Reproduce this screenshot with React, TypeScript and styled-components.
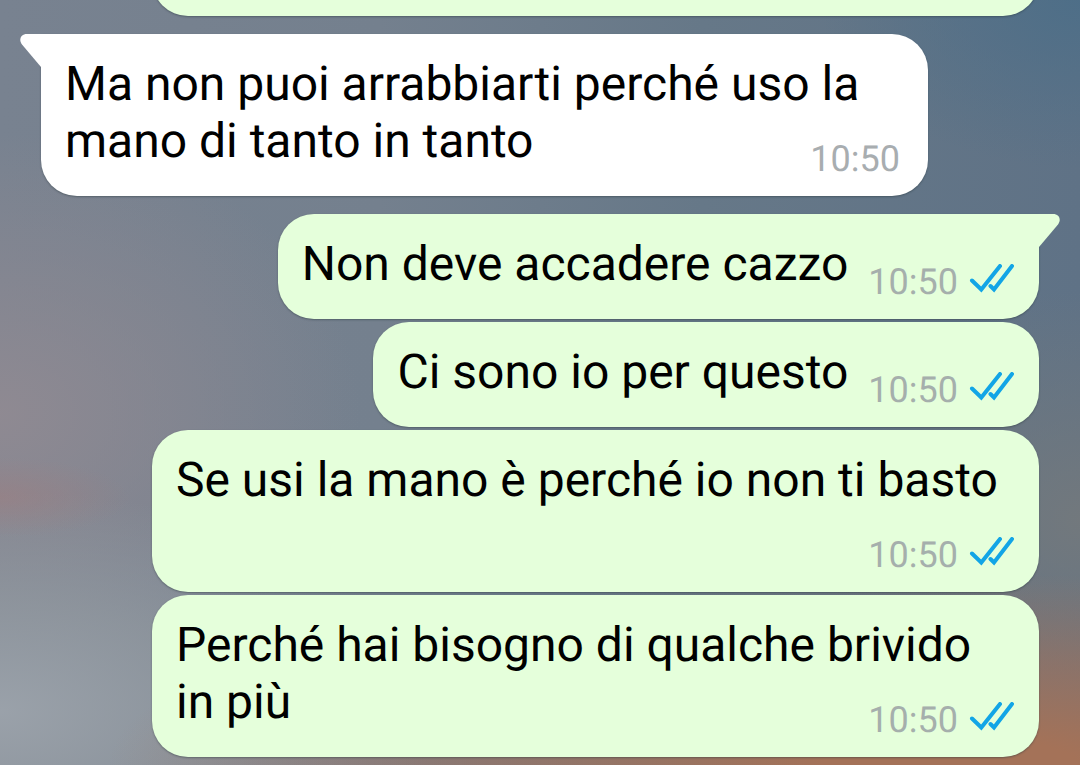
import React from "react";
import styled, { createGlobalStyle, css } from "styled-components";

const GlobalStyle = createGlobalStyle`
  *, *::before, *::after { box-sizing: border-box; }
  html, body { margin: 0; }
  body { background: #74808e; overflow-x: hidden; }
`;

const Chat = styled.main`
  min-height: 100vh;
  overflow: hidden;
  padding: 0 41px 8px;
  display: flex;
  flex-direction: column;
  font-family: Roboto, "Noto Sans", sans-serif;
  text-rendering: geometricPrecision;
  color: #000;
  background:
    radial-gradient(ellipse 130px 40px at 0 65%, rgba(158, 126, 128, 0.55), transparent),
    radial-gradient(ellipse 78% 25% at 88% 100%, rgb(164, 114, 88) 15%, rgba(162, 114, 90, 0.6) 55%, transparent),
    radial-gradient(ellipse 440px 220px at 0 93%, rgba(156, 163, 171, 0.95), rgba(146, 153, 160, 0.75) 50%, transparent),
    radial-gradient(ellipse 360px 280px at 0 54%, rgba(144, 138, 146, 0.95), transparent),
    radial-gradient(ellipse 260px 30% at 100% 68%, rgba(116, 121, 124, 0.9), transparent),
    radial-gradient(ellipse 260px 22% at 100% 0, rgba(76, 110, 136, 0.9), transparent),
    linear-gradient(to right, #788290, #74808e 35%, #667888 65%, #5f7286);
`;

const List = styled.ol`
  list-style: none;
  margin: 0;
  padding: 3px 0 0;
  display: flex;
  flex-direction: column;
  gap: 3px;
`;

type Side = "in" | "out";

const Row = styled.li<{ $side: Side; $first: boolean }>`
  display: flex;
  justify-content: ${(p) => (p.$side === "out" ? "flex-end" : "flex-start")};
  margin-top: ${(p) => (p.$first ? "15px" : "0")};
`;

const Bubble = styled.article<{ $side: Side; $tail: boolean }>`
  position: relative;
  max-width: calc(100% - 111px);
  padding: 21px ${(p) => (p.$side === "out" ? "25px" : "28px")} 19px 24px;
  border-radius: 36px;
  background: ${(p) => (p.$side === "out" ? "#e5ffdb" : "#fff")};
  box-shadow: 0 1px 2px rgba(40, 55, 60, 0.45);
  ${(p) =>
    p.$tail &&
    (p.$side === "out"
      ? css`border-top-right-radius: 0;`
      : css`border-top-left-radius: 0;`)}
`;

const PreviousBubble = styled.div`
  align-self: flex-end;
  width: calc(100% - 111px);
  height: 16px;
  display: flex;
  flex-direction: column;
  justify-content: flex-end;
  &::after {
    content: "";
    flex: none;
    height: 105px;
    border-radius: 36px;
    background: #e5ffdb;
    box-shadow: 0 1px 2px rgba(40, 55, 60, 0.45);
  }
`;

const TailShape = styled.svg<{ $side: Side }>`
  position: absolute;
  top: 0;
  width: 22px;
  height: 34px;
  fill: ${(p) => (p.$side === "out" ? "#e5ffdb" : "#fff")};
  ${(p) =>
    p.$side === "out"
      ? css`right: -21px;`
      : css`left: -21px; transform: scaleX(-1);`}
`;

const Text = styled.p`
  display: flow-root;
  margin: 0;
  font-size: 48px;
  line-height: 57px;
`;

const Meta = styled.span`
  float: right;
  display: flex;
  align-items: flex-start;
  gap: 11px;
  padding-top: 29px;
  margin-left: 20px;
  font-size: 36px;
  line-height: 36px;
  color: #a5afac;
`;

const IncomingTime = styled.time`
  color: #a8adb0;
`;

const Ticks = styled.svg`
  width: 45px;
  height: 30px;
  fill: none;
  stroke: #12a5e6;
  stroke-width: 4;
`;

function Tail({ side }: { side: Side }) {
  return (
    <TailShape $side={side} viewBox="0 0 22 34" aria-hidden="true">
      <path d="M0 0H15C21.500 0 23.500 6 20 10.500L1 33H0Z" />
    </TailShape>
  );
}

function ReadTicks() {
  return (
    <Ticks viewBox="0 0 45 30" role="img" aria-label="Letto">
      <path d="M3 16.500L12.300 25.500L31 2" strokeLinecap="round" />
      <path d="M21.500 22L25 25.500L43 2" strokeLinecap="round" />
    </Ticks>
  );
}

interface Message {
  side: Side;
  text: string;
  time: string;
  tail?: boolean;
}

const messages: Message[] = [
  { side: "in", text: "Ma non puoi arrabbiarti perché uso la mano di tanto in tanto", time: "10:50", tail: true },
  { side: "out", text: "Non deve accadere cazzo", time: "10:50", tail: true },
  { side: "out", text: "Ci sono io per questo", time: "10:50" },
  { side: "out", text: "Se usi la mano è perché io non ti basto", time: "10:50" },
  { side: "out", text: "Perché hai bisogno di qualche brivido in più", time: "10:50" },
];

export default function App() {
  return (
    <>
      <GlobalStyle />
      <Chat>
        <PreviousBubble />
        <List>
          {messages.map((m) => (
            <Row key={m.text} $side={m.side} $first={!!m.tail}>
              <Bubble $side={m.side} $tail={!!m.tail}>
                {m.tail && <Tail side={m.side} />}
                <Text>
                  {m.text}
                  <Meta>
                    {m.side === "in" ? (
                      <IncomingTime>{m.time}</IncomingTime>
                    ) : (
                      <>
                        <time>{m.time}</time>
                        <ReadTicks />
                      </>
                    )}
                  </Meta>
                </Text>
              </Bubble>
            </Row>
          ))}
        </List>
      </Chat>
    </>
  );
}
